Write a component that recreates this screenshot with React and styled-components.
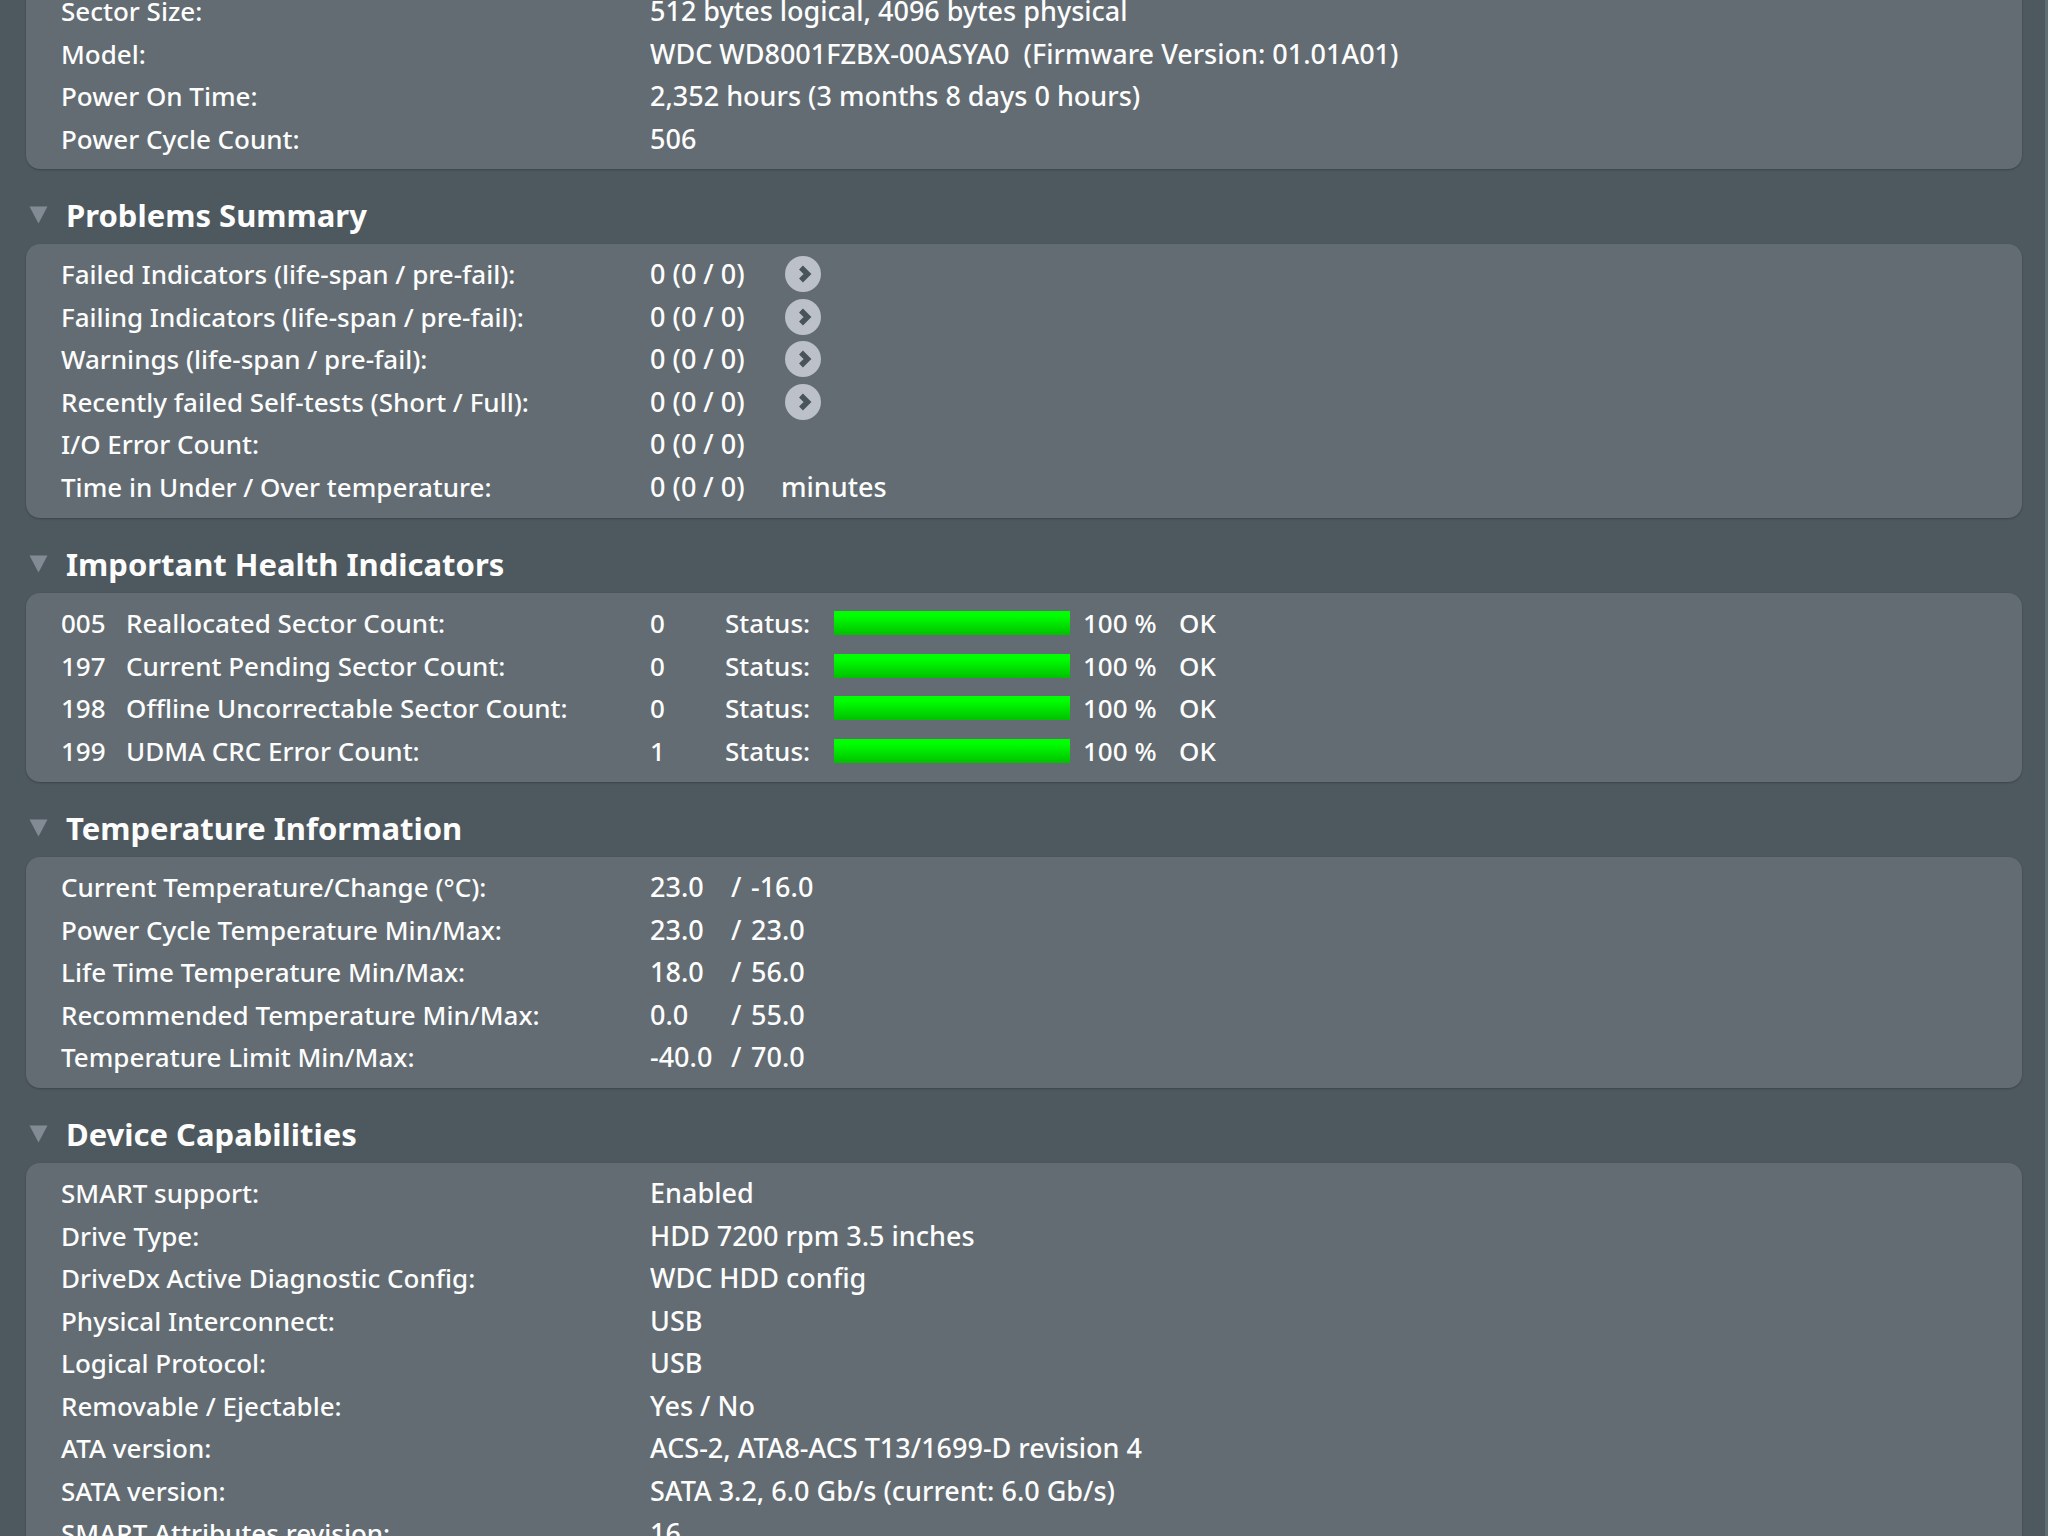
import React, { useState } from 'react';
import styled, { createGlobalStyle } from 'styled-components';

const GlobalStyle = createGlobalStyle`
  * { box-sizing: border-box; }
  body {
    margin: 0;
    background: #4d585f;
    color: #fdfdfd;
    font-family: "Noto Sans", "Open Sans", sans-serif;
    font-size: 26px;
    font-weight: 500;
  }
`;

const Window = styled.main`
  height: 100vh;
  overflow: hidden;
  border-right: 3px solid #5f6e74;
`;

const Report = styled.div`
  margin-top: -10px;
  padding: 0 23px 0 26px;
`;

const SectionHeader = styled.h2`
  margin: 0;
  height: 75px;
  padding-top: 16px;
  font-size: 31px;
  line-height: 60px;
`;

const Disclosure = styled.button`
  display: flex;
  align-items: center;
  gap: 18px;
  height: 59px;
  padding: 0 0 0 3px;
  border: 0;
  background: none;
  color: inherit;
  font: inherit;
  font-weight: 700;
  cursor: pointer;

  svg {
    transform: rotate(${(p) => (p.$open ? '0deg' : '-90deg')});
  }
`;

const Panel = styled.div`
  padding: ${(p) => (p.$continued ? '0' : '9px')} 35px ${(p) => (p.$continued ? '9px' : '10px')};
  border-radius: ${(p) => (p.$continued ? '0 0 14px 14px' : '14px')};
  background: #626c72;
  box-shadow: 0 1px 2px rgba(0, 0, 0, 0.22);
`;

const List = styled.dl`
  margin: 0;
`;

const Row = styled.div`
  display: grid;
  grid-template-columns: 589px 1fr;
  align-items: center;
  height: 42px;
  line-height: 42px;
  white-space: pre;

  &:nth-child(even) {
    height: 43px;
  }
`;

const Term = styled.dt``;

const Value = styled.dd`
  display: flex;
  align-items: center;
  margin: 0;
  font-size: 27px;
`;

const Count = styled.span`
  width: ${(p) => (p.$unit ? '131px' : '135px')};
`;

const DetailsButton = styled.button`
  display: flex;
  width: 36px;
  height: 36px;
  align-items: center;
  justify-content: center;
  padding: 0;
  border: 0;
  border-radius: 50%;
  background: #bcc0c8;
  cursor: pointer;
`;

const Low = styled.span`
  width: 81px;
`;

const Slash = styled.span`
  width: 20px;
`;

const Table = styled.table`
  border-collapse: collapse;
  table-layout: fixed;
  width: 1200px;
`;

const TableRow = styled.tr`
  height: 42px;
  line-height: 42px;

  &:nth-child(even) {
    height: 43px;
  }
`;

const Cell = styled.td`
  padding: 0;
  font-weight: 500;
  text-align: left;
  white-space: nowrap;
`;

const Meter = styled.div`
  width: 236px;
  height: 24px;
`;

const MeterFill = styled.div`
  height: 100%;
  background: linear-gradient(#00ff00 20%, #00c000);
`;

const Triangle = () => (
  <svg width="19" height="18" viewBox="0 0 19 18" aria-hidden="true">
    <path d="M0.5 0.5H18.5L9.5 17.5Z" fill="#828b93" />
  </svg>
);

const Chevron = () => (
  <svg width="36" height="36" viewBox="0 0 36 36" aria-hidden="true">
    <path d="M16 11.5L22.5 18L16 24.5" fill="none" stroke="#48535a" strokeWidth="5.5" />
  </svg>
);

const drive = [
  ['Sector Size:', '512 bytes logical, 4096 bytes physical'],
  ['Model:', 'WDC WD8001FZBX-00ASYA0  (Firmware Version: 01.01A01)'],
  ['Power On Time:', '2,352 hours (3 months 8 days 0 hours)'],
  ['Power Cycle Count:', '506'],
];

const problems = [
  { label: 'Failed Indicators (life-span / pre-fail):', details: true },
  { label: 'Failing Indicators (life-span / pre-fail):', details: true },
  { label: 'Warnings (life-span / pre-fail):', details: true },
  { label: 'Recently failed Self-tests (Short / Full):', details: true },
  { label: 'I/O Error Count:' },
  { label: 'Time in Under / Over temperature:', unit: 'minutes' },
];

const indicators = [
  { id: '005', name: 'Reallocated Sector Count:', raw: 0, health: 100 },
  { id: '197', name: 'Current Pending Sector Count:', raw: 0, health: 100 },
  { id: '198', name: 'Offline Uncorrectable Sector Count:', raw: 0, health: 100 },
  { id: '199', name: 'UDMA CRC Error Count:', raw: 1, health: 100 },
];

const temperatures = [
  ['Current Temperature/Change (°C):', '23.0', '-16.0'],
  ['Power Cycle Temperature Min/Max:', '23.0', '23.0'],
  ['Life Time Temperature Min/Max:', '18.0', '56.0'],
  ['Recommended Temperature Min/Max:', '0.0', '55.0'],
  ['Temperature Limit Min/Max:', '-40.0', '70.0'],
];

const capabilities = [
  ['SMART support:', 'Enabled'],
  ['Drive Type:', 'HDD 7200 rpm 3.5 inches'],
  ['DriveDx Active Diagnostic Config:', 'WDC HDD config'],
  ['Physical Interconnect:', 'USB'],
  ['Logical Protocol:', 'USB'],
  ['Removable / Ejectable:', 'Yes / No'],
  ['ATA version:', 'ACS-2, ATA8-ACS T13/1699-D revision 4'],
  ['SATA version:', 'SATA 3.2, 6.0 Gb/s (current: 6.0 Gb/s)'],
  ['SMART Attributes revision:', '16'],
];

function Section({ title, children }) {
  const [open, setOpen] = useState(true);
  return (
    <section>
      <SectionHeader>
        <Disclosure type="button" $open={open} aria-expanded={open} onClick={() => setOpen(!open)}>
          <Triangle />
          {title}
        </Disclosure>
      </SectionHeader>
      {open && <Panel>{children}</Panel>}
    </section>
  );
}

function InfoList({ items }) {
  return (
    <List>
      {items.map(([label, value]) => (
        <Row key={label}>
          <Term>{label}</Term>
          <Value>{value}</Value>
        </Row>
      ))}
    </List>
  );
}

export default function App() {
  return (
    <Window>
      <GlobalStyle />
      <Report>
        <Panel $continued>
          <InfoList items={drive} />
        </Panel>

        <Section title="Problems Summary">
          <List>
            {problems.map(({ label, details, unit }) => (
              <Row key={label}>
                <Term>{label}</Term>
                <Value>
                  <Count $unit={unit}>0 (0 / 0)</Count>
                  {details && (
                    <DetailsButton type="button" aria-label={label}>
                      <Chevron />
                    </DetailsButton>
                  )}
                  {unit}
                </Value>
              </Row>
            ))}
          </List>
        </Section>

        <Section title="Important Health Indicators">
          <Table>
            <colgroup>
              <col width="65" />
              <col width="524" />
              <col width="75" />
              <col width="109" />
              <col width="249" />
              <col width="96" />
              <col />
            </colgroup>
            <tbody>
              {indicators.map(({ id, name, raw, health }) => (
                <TableRow key={id}>
                  <Cell>{id}</Cell>
                  <Cell as="th" scope="row">{name}</Cell>
                  <Cell>{raw}</Cell>
                  <Cell>Status:</Cell>
                  <Cell>
                    <Meter role="meter" aria-label={name} aria-valuenow={health}>
                      <MeterFill style={{ width: `${health}%` }} />
                    </Meter>
                  </Cell>
                  <Cell>{health} %</Cell>
                  <Cell>OK</Cell>
                </TableRow>
              ))}
            </tbody>
          </Table>
        </Section>

        <Section title="Temperature Information">
          <List>
            {temperatures.map(([label, low, high]) => (
              <Row key={label}>
                <Term>{label}</Term>
                <Value>
                  <Low>{low}</Low>
                  <Slash>/</Slash>
                  {high}
                </Value>
              </Row>
            ))}
          </List>
        </Section>

        <Section title="Device Capabilities">
          <InfoList items={capabilities} />
        </Section>
      </Report>
    </Window>
  );
}
